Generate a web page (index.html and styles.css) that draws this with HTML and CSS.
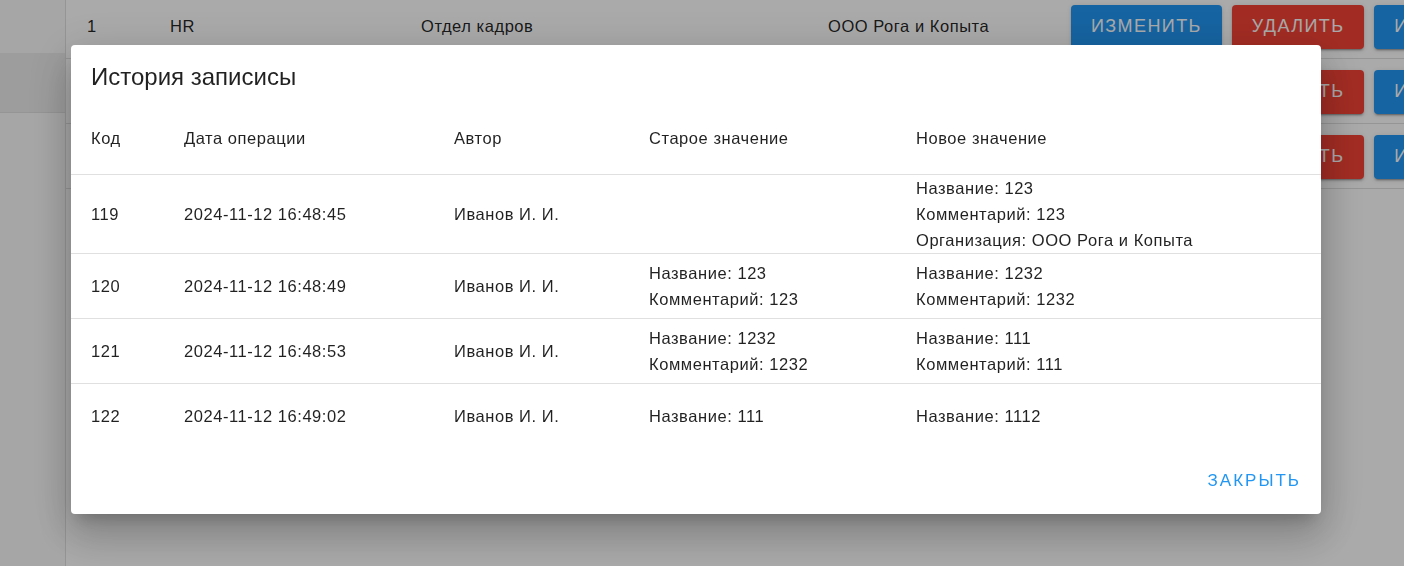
FILE: index.html
```html
<!DOCTYPE html>
<html lang="ru">
<head>
<meta charset="utf-8">
<title>История записисы</title>
<link rel="stylesheet" href="styles.css">
</head>
<body>
<div class="app">
  <aside class="sidebar">
    <div class="side-item"></div>
    <div class="side-item active"></div>
    <div class="side-item"></div>
  </aside>
  <main class="main">
    <div class="row">
      <span class="c c1">1</span>
      <span class="c c2">HR</span>
      <span class="c c3">Отдел кадров</span>
      <span class="c c4">ООО Рога и Копыта</span>
      <span class="btns"><span class="btn blue">Изменить</span><span class="btn red">Удалить</span><span class="btn blue">История</span></span>
    </div>
    <div class="row">
      <span class="c c1">2</span>
      <span class="c c2">IT</span>
      <span class="c c3">Отдел ИТ</span>
      <span class="c c4">ООО Рога и Копыта</span>
      <span class="btns"><span class="btn blue">Изменить</span><span class="btn red">Удалить</span><span class="btn blue">История</span></span>
    </div>
    <div class="row">
      <span class="c c1">3</span>
      <span class="c c2">FIN</span>
      <span class="c c3">Бухгалтерия</span>
      <span class="c c4">ООО Рога и Копыта</span>
      <span class="btns"><span class="btn blue">Изменить</span><span class="btn red">Удалить</span><span class="btn blue">История</span></span>
    </div>
  </main>
</div>
<div class="overlay"></div>
<div class="dialog">
  <div class="dialog-title">История записисы</div>
  <table class="hist">
    <colgroup>
      <col class="w1"><col class="w2"><col class="w3"><col class="w4"><col class="w5">
    </colgroup>
    <thead>
      <tr><th>Код</th><th>Дата операции</th><th>Автор</th><th>Старое значение</th><th>Новое значение</th></tr>
    </thead>
    <tbody>
      <tr class="tall">
        <td>119</td><td>2024-11-12 16:48:45</td><td>Иванов И. И.</td>
        <td></td>
        <td><div>Название: 123</div><div>Комментарий: 123</div><div>Организация: ООО Рога и Копыта</div></td>
      </tr>
      <tr>
        <td>120</td><td>2024-11-12 16:48:49</td><td>Иванов И. И.</td>
        <td><div>Название: 123</div><div>Комментарий: 123</div></td>
        <td><div>Название: 1232</div><div>Комментарий: 1232</div></td>
      </tr>
      <tr>
        <td>121</td><td>2024-11-12 16:48:53</td><td>Иванов И. И.</td>
        <td><div>Название: 1232</div><div>Комментарий: 1232</div></td>
        <td><div>Название: 111</div><div>Комментарий: 111</div></td>
      </tr>
      <tr class="last">
        <td>122</td><td>2024-11-12 16:49:02</td><td>Иванов И. И.</td>
        <td><div>Название: 111</div></td>
        <td><div>Название: 1112</div></td>
      </tr>
    </tbody>
  </table>
  <div class="actions"><span class="text-btn">Закрыть</span></div>
</div>
</body>
</html>
```
FILE: styles.css
```css
* { box-sizing: border-box; }
html, body { margin: 0; padding: 0; }
body {
  width: 1404px;
  height: 566px;
  overflow: hidden;
  background: #ffffff;
  font-family: "Liberation Sans", Arial, sans-serif;
  color: rgba(0, 0, 0, 0.87);
  font-size: 16.5px;
  letter-spacing: 0.55px;
}
.app { display: flex; height: 566px; }
.sidebar {
  width: 66px;
  flex: none;
  border-right: 1px solid #e0e0e0;
  background: #fafafa;
  display: flex;
  flex-direction: column;
}
.side-item { height: 53px; }
.side-item.active { height: 60px; background: #ececec; border-bottom: 1px solid #e0e0e0; }
.main { flex: 1; margin-top: -6px; overflow: hidden; }
.row {
  display: flex;
  align-items: center;
  height: 65px;
  border-bottom: 1px solid #e0e0e0;
}
.c { flex: none; white-space: nowrap; }
.c1 { width: 104px; padding-left: 21px; }
.c2 { width: 251px; }
.c3 { width: 407px; }
.c4 { width: 243px; }
.btns { display: flex; gap: 10px; flex: none; }
.btn {
  height: 44px;
  padding: 0 20px;
  margin-top: 1px;
  display: inline-flex;
  align-items: center;
  border-radius: 4px;
  color: #ffffff;
  text-transform: uppercase;
  font-size: 18px;
  letter-spacing: 1.4px;
  white-space: nowrap;
  box-shadow: 0 3px 1px -2px rgba(0,0,0,.2), 0 2px 2px 0 rgba(0,0,0,.14), 0 1px 5px 0 rgba(0,0,0,.12);
}
.btn.blue { background: #2196f3; }
.btn.red { background: #f44336; }
.overlay {
  position: fixed;
  inset: 0;
  background: rgba(0, 0, 0, 0.335);
}
.dialog {
  position: fixed;
  left: 71px;
  top: 45px;
  width: 1250px;
  height: 469px;
  background: #ffffff;
  border-radius: 4px;
  box-shadow: 0 11px 15px -7px rgba(0,0,0,.2), 0 24px 38px 3px rgba(0,0,0,.14), 0 9px 46px 8px rgba(0,0,0,.12);
  display: flex;
  flex-direction: column;
}
.dialog-title {
  padding: 16px 20px 10px;
  font-size: 24px;
  line-height: 32px;
  letter-spacing: 0;
  color: rgba(0, 0, 0, 0.87);
}
.hist {
  width: 1250px;
  border-collapse: collapse;
  table-layout: fixed;
  color: rgba(0, 0, 0, 0.87);
}
.w1 { width: 93px; }
.w2 { width: 270px; }
.w3 { width: 195px; }
.w4 { width: 267px; }
.w5 { width: 425px; }
.hist th {
  text-align: left;
  font-weight: 400;
  height: 71px;
  padding: 0 0 0 20px;
  border-bottom: 1px solid #e0e0e0;
}
.hist td {
  height: 65px;
  padding: 0 0 0 20px;
  line-height: 26px;
  vertical-align: middle;
  white-space: nowrap;
  border-bottom: 1px solid #e0e0e0;
}
.hist tr.tall td { height: 79px; }
.hist tr.last td { border-bottom: none; }
.actions {
  flex: 1;
  display: flex;
  align-items: center;
  justify-content: flex-end;
  padding: 0 20px 0 8px;
}
.text-btn {
  color: #2196f3;
  text-transform: uppercase;
  font-size: 17px;
  letter-spacing: 2px;
  font-weight: 500;
}
```
